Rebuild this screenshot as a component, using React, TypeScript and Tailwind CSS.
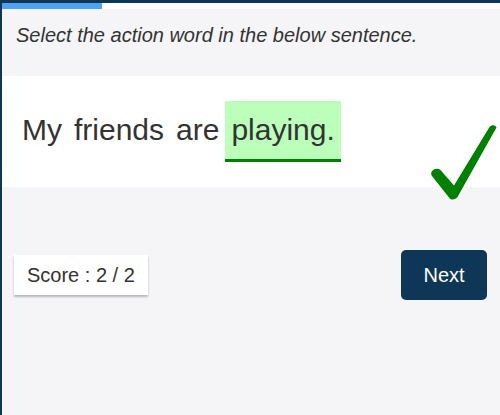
import React from "react";

const words = ["My", "friends", "are", "playing."];
const selected = 3;

function Tick() {
  return (
    <svg
      className="absolute left-[426px] top-[46px]"
      width="72"
      height="82"
      viewBox="0 0 72 82"
    >
      <path
        d="M3.5,50 C5.5,46.5 10,46 12.5,48 L26,63.5 L61.5,5 C63.5,2.5 67.5,2.5 68.5,5.5 L29.5,75 C27.5,78 22.5,78.5 21,75.5 L4,54 C3,52.5 3,51 3.5,50 Z"
        fill="#008000"
      />
    </svg>
  );
}

export default function App() {
  return (
    <div className="min-h-[415px] bg-[#f5f5f7] border-t-[3px] border-l-2 border-[#0e3657] font-['Liberation_Sans',Arial,sans-serif] text-[#333]">
      {/* progress */}
      <div className="h-[6px] bg-white">
        <div className="h-full w-[100px] bg-[#4da3f0]" />
      </div>

      {/* question */}
      <div className="h-[67px] px-[14px] pt-[15px]">
        <p className="italic text-[20px] leading-[23px]">
          Select the action word in the below sentence.
        </p>
      </div>

      {/* sentence */}
      <div className="relative bg-white px-[14px] py-[25px]">
        <div className="flex">
          {words.map((w, i) => (
            <span
              key={w}
              className={
                i === selected
                  ? "px-[6px] py-[11px] text-[30px] leading-[36px] bg-[#bbffbb] border-b-[3px] border-[#008000]"
                  : "px-[6px] py-[11px] text-[30px] leading-[36px] border-b-[3px] border-transparent"
              }
            >
              {w}
            </span>
          ))}
        </div>
        <Tick />
      </div>

      {/* footer */}
      <div className="flex items-center justify-between pl-[12px] pr-[13px] mt-[63px]">
        <div className="h-[40px] flex items-center px-[13px] bg-white text-[20px] leading-[23px] shadow-[0_2px_2px_rgba(0,0,0,0.25)]">
          Score : 2 / 2
        </div>
        <button className="w-[86px] h-[50px] rounded-[5px] bg-[#0e3657] text-white text-[20px] leading-[23px]">
          Next
        </button>
      </div>
    </div>
  );
}
